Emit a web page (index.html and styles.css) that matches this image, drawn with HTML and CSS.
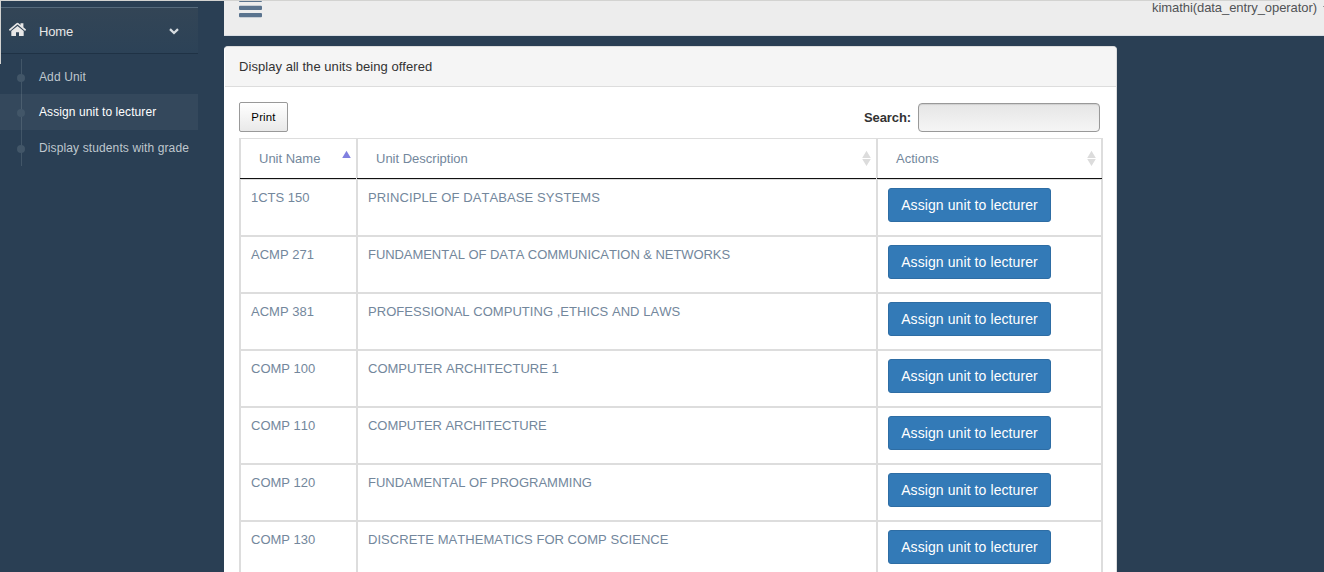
FILE: index.html
```html
<!DOCTYPE html>
<html lang="en">
<head>
<meta charset="utf-8">
<title>Units</title>
<link rel="stylesheet" href="styles.css">
</head>
<body>
<div class="window-edge"></div>
<div class="layout">
  <nav class="sidebar">
    <a class="home">
      <svg class="home-icon" width="17" height="15" viewBox="0 0 17 15"><path d="M8.5 4 2.3 9V13.4q0 .7.7.7H7V10.2h3v3.9h4q.7 0 .7-.7V9Z"/><path d="M-.1 7.7 7.4 1.3q1.1-.9 2.2 0l1.9 1.6V1.2H14.4v4.1L17.1 7.7l-1 1.2L8.5 2.6.9 8.9Z"/></svg>
      <span class="home-label">Home</span>
      <svg class="chevron" width="10" height="7" viewBox="0 0 10 7"><path d="M1 1.2 5 5 9 1.2"/></svg>
    </a>
    <ul class="submenu">
      <li>Add Unit</li>
      <li class="current">Assign unit to lecturer</li>
      <li>Display students with grade</li>
    </ul>
  </nav>
  <main class="main">
    <header class="topbar">
      <svg class="bars" width="23" height="18" viewBox="0 0 23 18"><rect y="-3" width="23" height="4" rx="1"/><rect y="4.7" width="23" height="4.2" rx="1"/><rect y="12" width="23" height="4.2" rx="1"/></svg>
      <span class="user">kimathi(data_entry_operator)<i class="caret"></i></span>
    </header>
    <section class="panel">
      <h1 class="panel-title">Display all the units being offered</h1>
      <div class="panel-body">
        <div class="tools">
          <button class="print">Print</button>
          <label class="search">Search:<input type="text"></label>
        </div>
        <table class="units">
          <colgroup><col class="c-name"><col class="c-desc"><col class="c-act"></colgroup>
          <thead>
            <tr>
              <th><div class="head">Unit Name<svg width="9" height="16" viewBox="0 0 9 16"><path class="on" d="M4.5.8 8.8 8H.2Z"/></svg></div></th>
              <th><div class="head">Unit Description<svg width="9" height="16" viewBox="0 0 9 16"><path d="M4.5.8 8.8 8H.2ZM.2 9h8.6L4.5 16Z"/></svg></div></th>
              <th><div class="head">Actions<svg width="9" height="16" viewBox="0 0 9 16"><path d="M4.5.8 8.8 8H.2ZM.2 9h8.6L4.5 16Z"/></svg></div></th>
            </tr>
          </thead>
          <tbody>
            <tr><td>1CTS 150</td><td class="looser">PRINCIPLE OF DATABASE SYSTEMS</td><td><button class="assign">Assign unit to lecturer</button></td></tr>
            <tr><td>ACMP 271</td><td class="tight">FUNDAMENTAL OF DATA COMMUNICATION &amp; NETWORKS</td><td><button class="assign">Assign unit to lecturer</button></td></tr>
            <tr><td>ACMP 381</td><td class="loose">PROFESSIONAL COMPUTING ,ETHICS AND LAWS</td><td><button class="assign">Assign unit to lecturer</button></td></tr>
            <tr><td>COMP 100</td><td>COMPUTER ARCHITECTURE 1</td><td><button class="assign">Assign unit to lecturer</button></td></tr>
            <tr><td>COMP 110</td><td class="tight">COMPUTER ARCHITECTURE</td><td><button class="assign">Assign unit to lecturer</button></td></tr>
            <tr><td>COMP 120</td><td>FUNDAMENTAL OF PROGRAMMING</td><td><button class="assign">Assign unit to lecturer</button></td></tr>
            <tr><td>COMP 130</td><td class="loose">DISCRETE MATHEMATICS FOR COMP SCIENCE</td><td><button class="assign">Assign unit to lecturer</button></td></tr>
          </tbody>
        </table>
      </div>
    </section>
  </main>
</div>
</body>
</html>
```
FILE: styles.css
```css
* { box-sizing: border-box; }
body {
  margin: 0;
  height: 572px;
  overflow: hidden;
  background: #2a3f54;
  color: #73879c;
  font: 13px/18px "Liberation Sans", Arial, sans-serif;
  font-kerning: none;
}
/* thin frame lines along the window's top and left edges */
.window-edge {
  position: absolute;
  z-index: 2;
  top: 0;
  left: 0;
  width: 1280px;
  height: 64px;
  border-top: 1px solid #d3d3d1;
  border-left: 1px solid #d3d3d1;
  pointer-events: none;
}
.layout { display: flex; height: 572px; }
.sidebar { width: 224px; flex: none; padding-top: 7px; }
.home {
  display: flex;
  align-items: center;
  width: 198px;
  height: 47px;
  padding: 1px 19px 0 9px;
  border-top: 1px solid #566a7c;
  border-bottom: 1px solid #1f3245;
  background: linear-gradient(#334556, #2c4257);
  color: #e7e7e7;
}
.home-icon { width: 17px; height: 15px; margin: -3px 13px 0 0; fill: #e7e7e7; }
.home-label { padding-top: 2px; letter-spacing: -.15px; }
.chevron { margin-left: auto; fill: none; stroke: #d7dce0; stroke-width: 2.3; }
.submenu {
  position: relative;
  margin: 5px 0 0;
  padding: 0;
  list-style: none;
  font-size: 12px;
  letter-spacing: .12px;
  color: #bfc7ce;
}
.submenu::before {
  content: "";
  position: absolute;
  left: 21px;
  top: 0;
  width: 1px;
  height: 107px;
  background: #425668;
}
.submenu li {
  position: relative;
  height: 36px;
  padding-left: 39px;
  line-height: 36px;
  width: 224px;
}
.submenu li:first-child { height: 35px; }
.submenu li::before {
  content: "";
  position: absolute;
  left: 17px;
  top: 15px;
  width: 8px;
  height: 8px;
  border-radius: 50%;
  background: #425668;
}
.submenu .current { width: 198px; background: rgba(255, 255, 255, .05); color: #fff; letter-spacing: .08px; }
.main { width: 1100px; flex: none; }
.topbar {
  display: flex;
  justify-content: space-between;
  align-items: flex-start;
  height: 36px;
  padding-left: 15px;
  background: #ededed;
  border-bottom: 1px solid #d9dee4;
}
.bars { margin-top: 1px; fill: #5a738e; }
.user { display: flex; margin-top: -1px; color: #515356; letter-spacing: -.07px; }
.caret { width: 1px; height: 1px; margin: 7px 0 0 6px; background: #999; }
.panel {
  width: 893px;
  height: 540px;
  margin-top: 10px;
  border: 1px solid #ddd;
  border-left-color: #fff;
  border-radius: 4px;
  background: #fff;
}
.panel-title {
  height: 40px;
  margin: 0;
  padding-left: 14px;
  border-bottom: 1px solid #ddd;
  border-radius: 3px 3px 0 0;
  background: #f5f5f5;
  color: #333;
  font-size: 13px;
  font-weight: normal;
  line-height: 39px;
  letter-spacing: .05px;
}
.panel-body { padding: 15px 13px 0 14px; }
.tools { display: flex; justify-content: space-between; height: 36px; padding-right: 3px; }
.print {
  width: 49px;
  height: 30px;
  padding: 0;
  border: 1px solid #999;
  border-radius: 2px;
  background: linear-gradient(#fff, #e9e9e9);
  color: #000;
  font: 11.44px "Liberation Sans", Arial, sans-serif;
  letter-spacing: .15px;
}
.search { display: flex; line-height: 31px; color: #333; font-weight: bold; letter-spacing: -.1px; }
.search input {
  width: 182px;
  height: 29px;
  margin: 1px 0 0 7px;
  border: 1px solid #999;
  border-radius: 4px;
  background: linear-gradient(#e6e6e6, #f5f5f5);
  box-shadow: inset 0 1px 1px rgba(0, 0, 0, .1);
}
.units {
  width: 864px;
  table-layout: fixed;
  border-collapse: separate;
  border-spacing: 0;
  border-top: 1px solid #ddd;
}
.c-name { width: 117px; }
.c-desc { width: 520px; }
.c-act { width: 227px; }
.units th, .units td {
  padding: 0;
  border-left: 2px solid #ddd;
  text-align: left;
  font-weight: normal;
  vertical-align: top;
}
.units th:last-child, .units td:last-child { border-right: 2px solid #ddd; }
.units th { height: 41px; border-bottom: 1px solid #ddd; }
.head {
  display: flex;
  justify-content: space-between;
  height: 40px;
  margin-left: -1px;
  padding: 11px 5px 0 19px;
  border-bottom: 1px solid #111;
}
.units th:last-child .head { margin-right: -1px; padding-right: 6px; }
.head svg { fill: #dcdcdc; }
.head .on { fill: #8080e0; }
.units td { height: 57px; padding: 9px 10px 0; border-bottom: 2px solid #ddd; }
.units .looser { letter-spacing: .1px; }
.units .loose { letter-spacing: .04px; }
.units .tight { letter-spacing: -.06px; }
.assign {
  display: block;
  width: 163px;
  height: 34px;
  margin-top: -1px;
  padding: 0;
  border: 1px solid #2e6da4;
  border-radius: 3px;
  background: #337ab7;
  color: #fff;
  font: 14px "Liberation Sans", Arial, sans-serif;
  letter-spacing: .09px;
}
```
